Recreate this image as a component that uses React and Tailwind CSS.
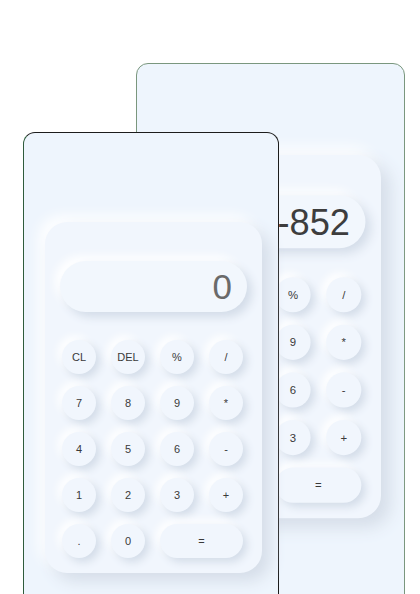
const KEYS = [
  ['CL', 'DEL', '%', '/'],
  ['7', '8', '9', '*'],
  ['4', '5', '6', '-'],
  ['1', '2', '3', '+'],
];

function Key({ label, wide }) {
  return (
    <button
      className={`h-[34px] ${wide ? 'col-span-2 rounded-[17px]' : 'w-[34px] rounded-full'} bg-[#f1f6fd] text-[11px] text-[#3a3a3a] shadow-[4px_4px_8px_#d3dce8,-4px_-4px_8px_#ffffff] flex items-center justify-center`}
    >
      {label}
    </button>
  );
}

function Calc({ value, valueColor }) {
  return (
    <div className="w-[217px] rounded-[22px] bg-[#f1f6fd] px-[15px] pt-[39px] pb-[15px] shadow-[8px_8px_16px_#d5dde8,-6px_-6px_14px_#ffffff]">
      <div
        className={`h-[51px] rounded-[26px] bg-[#f2f7fd] shadow-[5px_5px_10px_#d3dce8,-5px_-5px_10px_#ffffff] flex items-center justify-end pr-[15px] text-[35px] leading-none ${valueColor}`}
      >
        {value}
      </div>
      <div className="mt-[28px] pl-[2px] grid grid-cols-[repeat(4,34px)] gap-x-[15px] gap-y-[12px]">
        {KEYS.flat().map((k) => (
          <Key key={k} label={k} />
        ))}
        <Key label="." />
        <Key label="0" />
        <Key label="=" wide />
      </div>
    </div>
  );
}

export default function App() {
  return (
    <div className="relative w-[420px] h-[594px] bg-white overflow-hidden font-['Liberation_Sans',Arial,sans-serif]">
      {/* back window */}
      <div className="absolute left-[136px] top-[63px] w-[269px] h-[600px] rounded-[12px] border border-[#7a977e] bg-[#eef5fd] flex flex-col">
        <div className="ml-auto mr-[23px] mt-[91px] origin-top-right scale-[1.035]">
          <Calc value="-852" valueColor="text-[#3d3d3d]" />
        </div>
      </div>

      {/* front window */}
      <div className="absolute left-[23px] top-[132px] w-[256px] h-[500px] rounded-[12px] border border-[#1c1c1c] border-l-[#2f5c3c] bg-[#eef5fd] flex flex-col">
        <div className="ml-[21px] mt-[89px]">
          <Calc value="0" valueColor="text-[#6a6a6a]" />
        </div>
      </div>
    </div>
  );
}
